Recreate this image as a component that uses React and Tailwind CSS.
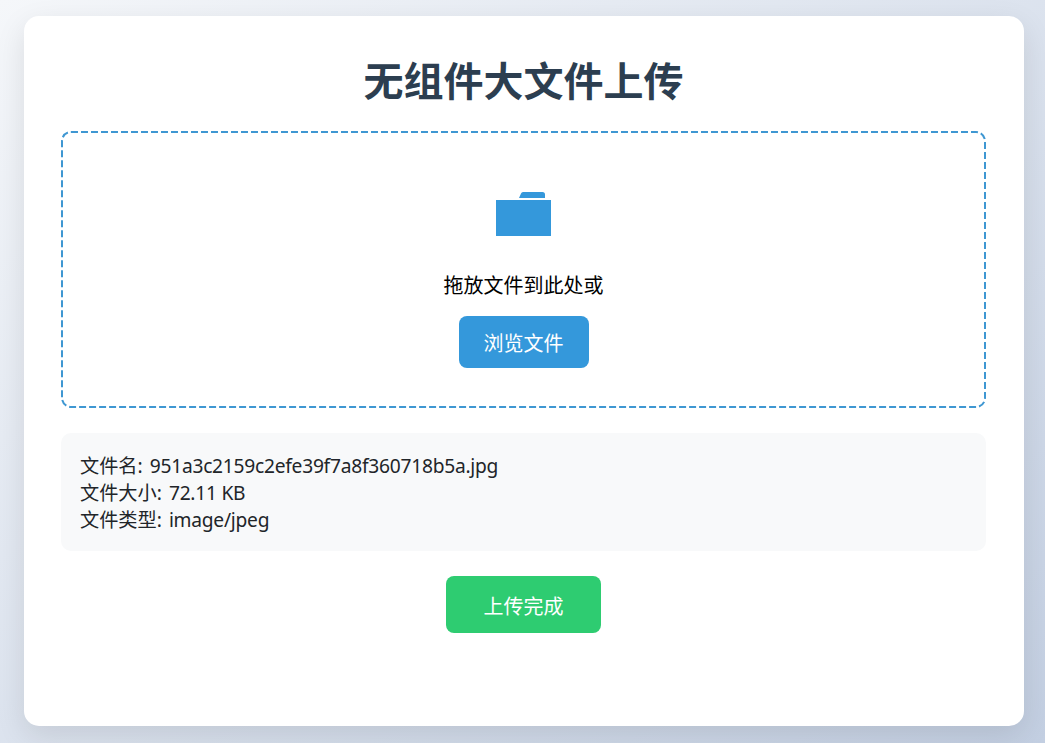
const fontStack = { fontFamily: '"Noto Sans", "Noto Sans CJK SC", sans-serif' };

const fileRows = [
  ["文件名:", "951a3c2159c2efe39f7a8f360718b5a.jpg"],
  ["文件大小:", "72.11 KB"],
  ["文件类型:", "image/jpeg"],
];

function FolderIcon() {
  return (
    <svg width="55" height="46" viewBox="0 0 55 46" className="block">
      <path d="M23 7 L25 2.5 Q25.5 1 27 1 L46.5 1 Q49 1 49 3.5 L49 7 Z" fill="#3498db" />
      <rect x="0" y="9" width="55" height="36" fill="#3498db" />
    </svg>
  );
}

// the dash rhythm of the drop zone is longer than what a css dashed border gives
function DashedOutline() {
  return (
    <svg width="925" height="277" className="pointer-events-none absolute top-0 left-0">
      <rect
        x="1"
        y="1"
        width="923"
        height="275"
        rx="9"
        fill="none"
        stroke="#3f97d2"
        strokeWidth="2"
        strokeDasharray="7 3"
      />
    </svg>
  );
}

export default function App() {
  return (
    <div
      className="h-[743px] w-[1045px] overflow-hidden bg-gradient-to-br from-[#f5f7fa] to-[#c3cfe2] px-6 pt-4 text-black"
      style={fontStack}
    >
      <div className="flex h-[710px] w-[1000px] flex-col rounded-[15px] bg-white pr-[38px] pl-[37px] shadow-[0_10px_30px_rgba(0,0,0,0.1)]">
        <h1 className="mt-[39px] h-[52px] text-center text-[40px] leading-[52px] font-bold text-[#2c3e50]">
          无组件大文件上传
        </h1>

        <div className="relative mt-6 flex h-[277px] flex-col items-center rounded-[10px] pt-[60px]">
          <DashedOutline />
          <FolderIcon />
          <p className="mt-[34px] text-[20px] leading-[30px]">拖放文件到此处或</p>
          <button className="mt-[15px] h-[52px] w-[130px] rounded-lg bg-[#3498db] pt-1 text-[20px] text-white">
            浏览文件
          </button>
        </div>

        <div className="mt-[25px] h-[118px] rounded-[10px] bg-[#f8f9fa] px-[19px] py-[19px] text-[19.2px] leading-[27px] text-[#212529]">
          {fileRows.map(([label, value]) => (
            <div key={label}>
              <span className="mr-[2px]">{label}</span>{" "}
              <span className="tracking-[-0.25px]">{value}</span>
            </div>
          ))}
        </div>

        <button className="mx-auto mt-[25px] h-[57px] w-[155px] rounded-lg bg-[#2ecc71] pt-1 text-[20px] text-white">
          上传完成
        </button>
      </div>
    </div>
  );
}
